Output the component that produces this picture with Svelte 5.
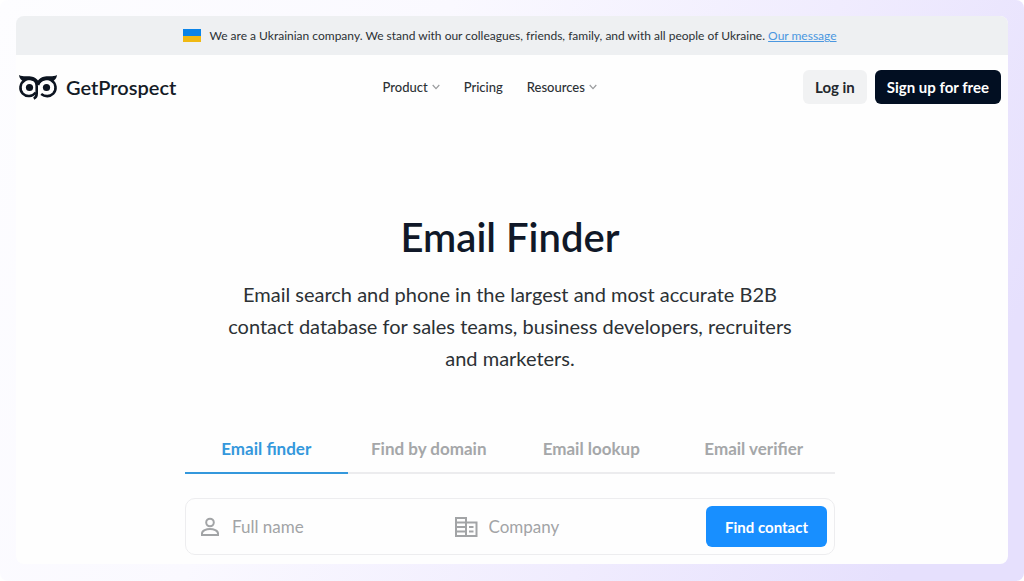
<script lang="ts">
  const links = [
    { label: 'Product', menu: true },
    { label: 'Pricing', menu: false },
    { label: 'Resources', menu: true },
  ];

  const tabs = ['Email finder', 'Find by domain', 'Email lookup', 'Email verifier'];

  let active = $state(0);
  let fullName = $state('');
  let company = $state('');
</script>

<div class="backdrop">
  <div class="card">
    <div class="banner">
      <svg class="flag" viewBox="0 0 18 13" aria-hidden="true">
        <rect width="18" height="7" fill="#0b84e8" />
        <rect y="7" width="18" height="6" fill="#f0b913" />
      </svg>
      <span>We are a Ukrainian company. We stand with our colleagues, friends, family, and with all people of Ukraine. <a href="#message">Our message</a></span>
    </div>

    <header>
      <a class="brand" href="#home">
        <svg class="owl" viewBox="0 0 40 26" aria-hidden="true">
          <g fill="none" stroke="#0c1420" stroke-width="2.600">
            <path d="M7 6C1.500 9.500 1.300 16 4.800 19.700 8.300 23.200 14.500 22.800 17.800 18.500" />
            <path d="M33 6c5.500 3.500 5.700 10 2.200 13.700-3.200 3.200-8.400 3.200-12 0.300" />
            <path d="M12 4.800C16.500 5 18.700 8 18.700 12v7.500c0 2.700-0.900 4.200-3 5" />
            <path d="M28 4.800C24 5 21.500 7.300 20 11" />
          </g>
          <path d="M1 1C5 3 9 1.800 13 2.400c3.500 0.500 5.700 1.900 7 4.200 1.300-2.300 3.500-3.700 7-4.200C31 1.800 35 3 39 1c-0.300 3.200-2 5.500-5 6.700C31 5.800 27 5.500 24 7.500L20 11 16 7.500C13 5.500 9 5.800 6 7.700 3 6.500 1.300 4.200 1 1z" fill="#0c1420" />
          <circle cx="11.500" cy="13.500" r="3.600" fill="#0c1420" />
          <circle cx="28.500" cy="13.500" r="3.600" fill="#0c1420" />
        </svg>
        GetProspect
      </a>

      <nav>
        {#each links as link}
          <a href="#{link.label.toLowerCase()}">
            {link.label}
            {#if link.menu}
              <svg class="chevron" viewBox="0 0 8 6" aria-hidden="true">
                <path d="M0.700 1l3.300 3.700L7.300 1" fill="none" stroke="#9a9c9e" stroke-width="1.200" />
              </svg>
            {/if}
          </a>
        {/each}
      </nav>

      <div class="actions">
        <button class="login">Log in</button>
        <button class="signup">Sign up for free</button>
      </div>
    </header>

    <main>
      <h1>Email Finder</h1>
      <p>Email search and phone in the largest and most accurate B2B contact database for sales teams, business developers, recruiters and marketers.</p>

      <div class="finder">
        <div class="tabs" role="tablist">
          {#each tabs as tab, i}
            <button role="tab" class:active={active === i} aria-selected={active === i} onclick={() => (active = i)}>{tab}</button>
          {/each}
        </div>

        <form onsubmit={(e) => e.preventDefault()}>
          <label>
            <svg viewBox="0 0 24 24" aria-hidden="true">
              <circle cx="12" cy="7.500" r="3.800" />
              <path d="M4 20v-1.500c0-3 4.500-4.500 8-4.500s8 1.500 8 4.500V20z" />
            </svg>
            <input type="text" placeholder="Full name" aria-label="Full name" bind:value={fullName} />
          </label>
          <label>
            <svg viewBox="0 0 24 24" aria-hidden="true">
              <path d="M1 3h10v18H1zM1 7.500h10M1 12h10M1 16.500h10M11 7.500h10.500V21H11" />
              <path d="M14 12h4.500M14 16.500h4.500" />
            </svg>
            <input type="text" placeholder="Company" aria-label="Company" bind:value={company} />
          </label>
          <button>Find contact</button>
        </form>
      </div>
    </main>
  </div>
</div>

<style>
  :global(body) { background: #fff; }

  .backdrop {
    padding: 16px 16px 17px;
    border-radius: 8px;
    background: linear-gradient(115deg, #fdfdff 0%, #faf9ff 35%, #f0ecfe 65%, #e6e0fd 90%);
    font-family: Lato, "Open Sans", sans-serif;
    color: #2c3135;
  }
  .card {
    border-radius: 8px;
    overflow: hidden;
    background: #fefefe;
  }
  button, input { font: inherit; }
  button { border: 0; cursor: pointer; }

  .banner {
    display: flex;
    align-items: center;
    justify-content: center;
    gap: 8px;
    height: 39px;
    padding-right: 4px;
    background: #eef0f2;
    font-size: 12px;
  }
  .banner a { color: #4a97e0; }
  .flag { width: 18px; height: 13px; }

  header {
    display: flex;
    align-items: center;
    justify-content: space-between;
    padding: 15px 7px 14px 2px;
  }
  header a { color: inherit; text-decoration: none; }
  .brand {
    display: flex;
    align-items: center;
    gap: 8px;
    font-size: 20px;
    font-weight: 600;
  }
  header .brand { color: #141b26; }
  .owl { width: 40px; height: 26px; }
  nav { display: flex; gap: 24px; font-size: 13px; font-weight: 500; }
  nav a { display: flex; align-items: center; gap: 4px; }
  .chevron { width: 8px; height: 6px; }

  .actions { display: flex; gap: 8px; }
  .actions button {
    height: 34px;
    padding: 0 12px;
    border-radius: 6px;
    font-size: 15px;
    font-weight: 700;
  }
  .login { background: #f1f2f3; color: #23282d; }
  .signup { background: #020f22; color: #fff; }

  main { padding: 95px 4px 9px 0; text-align: center; }
  h1 {
    margin: 0;
    font-size: 40px;
    line-height: 48px;
    font-weight: 600;
    color: #101828;
  }
  p {
    max-width: 580px;
    margin: 17px auto 50px;
    font-size: 20px;
    line-height: 32px;
  }

  .finder { max-width: 650px; margin: 0 auto; }
  .tabs {
    display: grid;
    grid-template-columns: repeat(4, 1fr);
    box-shadow: inset 0 -2px #ececee;
  }
  .tabs button {
    height: 50px;
    padding: 0;
    border-bottom: 2px solid transparent;
    background: none;
    font-size: 17px;
    font-weight: 700;
    color: #a5a7a9;
  }
  .tabs .active { border-color: #3498dc; color: #3498dc; }

  form {
    display: flex;
    align-items: center;
    margin-top: 24px;
    padding: 7px;
    border: 1px solid #ededef;
    border-radius: 10px;
  }
  label {
    display: flex;
    flex: 1;
    align-items: center;
    gap: 10px;
    min-width: 0;
    padding-left: 5px;
  }
  label svg {
    flex: none;
    width: 24px;
    height: 24px;
    fill: none;
    stroke: #a2a4a6;
    stroke-width: 2;
  }
  input {
    flex: 1;
    min-width: 0;
    padding: 0;
    border: 0;
    outline: 0;
    background: none;
    font-size: 17px;
    color: #2c3135;
  }
  input::placeholder { color: #a2a4a6; opacity: 1; }
  form button {
    height: 41px;
    padding: 0 19px;
    border-radius: 6px;
    background: #188fff;
    font-size: 15px;
    font-weight: 700;
    color: #fff;
  }
</style>
